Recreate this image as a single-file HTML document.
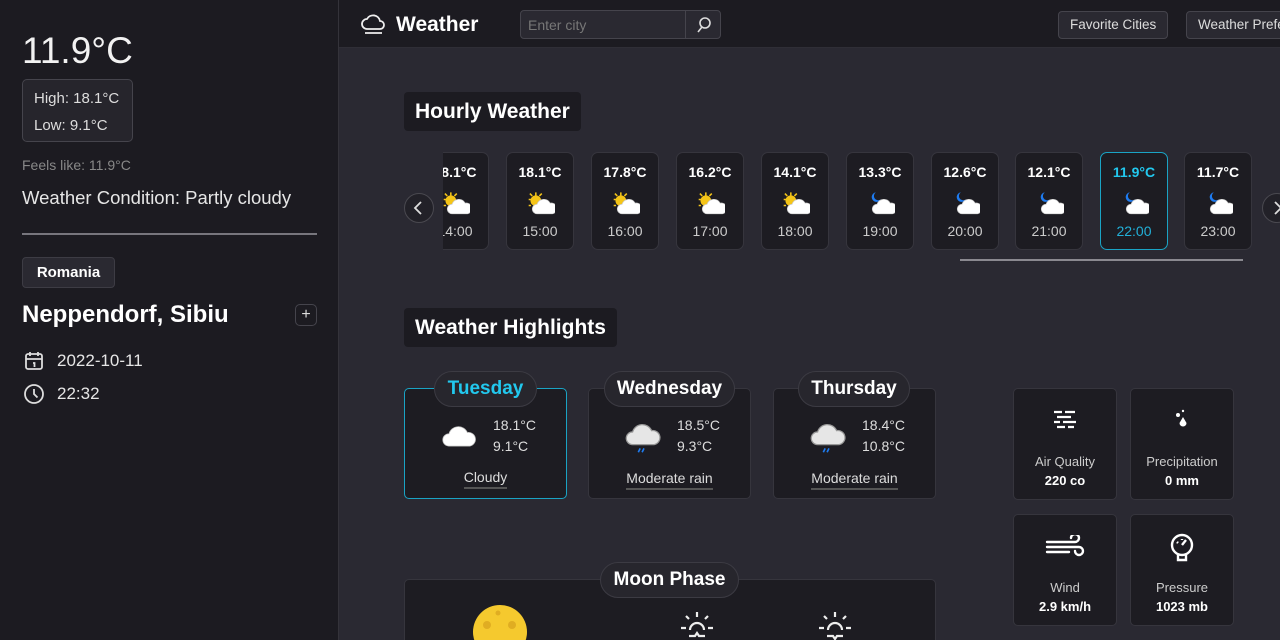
<!DOCTYPE html>
<html><head><meta charset="utf-8"><style>
*{margin:0;padding:0;box-sizing:border-box}
html,body{width:1280px;height:640px;overflow:hidden}
body{background:#2a2932;font-family:"Liberation Sans",sans-serif;color:#eee;position:relative}
.a{position:absolute}
#side{left:0;top:0;width:339px;height:640px;background:#1c1b21;border-right:1px solid #34333a}
#hdr{left:339px;top:0;width:941px;height:48px;background:#1c1b21;border-bottom:1px solid #2f2e36}
.btn{border:1px solid #45444c;border-radius:4px;background:#2a2931;font-size:14px;color:#ddd;height:28px;line-height:26px;padding:0 11px;white-space:nowrap}
.ttl{background:#1c1b21;border-radius:4px;font-weight:bold;font-size:21px;color:#fff;padding:0 11px;height:39px;line-height:39px;white-space:nowrap}
.hc{top:152px;width:68px;height:98px;background:#1d1c22;border:1px solid #36353d;border-radius:7px;text-align:center}
.hc .t{font-weight:bold;font-size:14px;margin-top:11px;color:#fff}
.hc .h{font-size:14px;color:#ccc}
.hc svg{display:block;margin:10px auto 8px}
.dc{top:388px;width:163px;height:111px;background:#1d1c22;border:1px solid #36353d;border-radius:5px}
.pill{background:#27262d;border:1px solid #3c3b43;border-radius:18px;font-weight:bold;font-size:19px;color:#fff;height:36px;line-height:34px;padding:0 8px;text-align:center;white-space:nowrap}
.sc{width:104px;height:112px;background:#1d1c22;border:1px solid #36353d;border-radius:5px;text-align:center;font-size:13px;color:#ccc}
.sc b{display:block;color:#fff;font-size:13px;margin-top:4px}
.nav{width:30px;height:30px;border-radius:50%;border:1px solid #4a4950;background:#222128}
</style></head><body>
<div id="side" class="a">
 <div class="a" style="left:22px;top:30px;font-size:37px;color:#f2f2f2">11.9°C</div>
 <div class="a" style="left:22px;top:79px;width:111px;height:63px;border:1px solid #45444c;border-radius:5px;background:#26252c;font-size:15px;color:#ddd;padding:5px 0 0 11px;line-height:27px">High: 18.1°C<br>Low: 9.1°C</div>
 <div class="a" style="left:22px;top:157px;font-size:14px;color:#888">Feels like: 11.9°C</div>
 <div class="a" style="left:22px;top:187px;font-size:18.5px;color:#e6e6e6">Weather Condition: Partly cloudy</div>
 <div class="a" style="left:22px;top:233px;width:295px;height:2px;background:#77767d"></div>
 <div class="a" style="left:22px;top:257px;width:93px;height:31px;border:1px solid #3d3c44;border-radius:4px;background:#2a2931;font-weight:bold;font-size:15px;line-height:29px;text-align:center;color:#fff">Romania</div>
 <div class="a" style="left:22px;top:301px;font-weight:bold;font-size:24px;color:#fff">Neppendorf, Sibiu</div>
 <div class="a" style="left:295px;top:304px;width:22px;height:22px;border:1px solid #45444c;border-radius:5px;text-align:center;line-height:19px;font-size:16px;color:#ddd">+</div>
 <svg class="a" style="left:23px;top:350px" width="22" height="22" viewBox="0 0 22 22" fill="none" stroke="#ddd" stroke-width="1.8"><rect x="3" y="4" width="16" height="15" rx="2"/><path d="M3 9h16M7 2v4M15 2v4M10 13h1.5v4"/></svg>
 <div class="a" style="left:57px;top:351px;font-size:17px;color:#e6e6e6">2022-10-11</div>
 <svg class="a" style="left:23px;top:383px" width="22" height="22" viewBox="0 0 22 22" fill="none" stroke="#ddd" stroke-width="1.8"><circle cx="11" cy="11" r="9"/><path d="M11 6v5l3.5 3.5"/></svg>
 <div class="a" style="left:57px;top:384px;font-size:17px;color:#e6e6e6">22:32</div>
</div>
<div id="hdr" class="a">
 <svg class="a" style="left:22px;top:12px" width="26" height="24" viewBox="0 0 26 24" fill="none" stroke="#eee" stroke-width="1.8"><path d="M6 17a5 5 0 0 1 0-10 7 7 0 0 1 13 2 4 4 0 0 1 0 8z"/><path d="M4 21h17"/></svg>
 <div class="a" style="left:57px;top:13px;font-weight:bold;font-size:21px;color:#fff">Weather</div>
 <div class="a" style="left:181px;top:10px;width:201px;height:29px;border:1px solid #45444c;border-radius:4px;background:#2a2931">
  <span class="a" style="left:7px;top:6px;font-size:14px;color:#777">Enter city</span>
  <div class="a" style="left:164px;top:0;width:1px;height:27px;background:#45444c"></div>
  <svg class="a" style="left:174px;top:5px" width="18" height="18" viewBox="0 0 18 18" fill="none" stroke="#ddd" stroke-width="1.6"><circle cx="10" cy="7" r="5"/><path d="M7 11l-4 5"/></svg>
 </div>
 <div class="a btn" style="left:719px;top:11px;font-size:13.5px">Favorite Cities</div>
 <div class="a btn" style="left:847px;top:11px;width:120px;overflow:hidden;font-size:13.5px">Weather Preferences</div>
</div>
<div class="a ttl" style="left:404px;top:92px">Hourly Weather</div>
<div class="a nav" style="left:404px;top:193px"><svg width="28" height="28" viewBox="0 0 28 28" fill="none" stroke="#ddd" stroke-width="1.8"><path d="M16 8l-6 6 6 6"/></svg></div>
<div class="a nav" style="left:1262px;top:193px"><svg width="28" height="28" viewBox="0 0 28 28" fill="none" stroke="#ddd" stroke-width="1.8"><path d="M12 8l6 6-6 6"/></svg></div>
<svg width="0" height="0" style="position:absolute"><defs>
<g id="sun"><g stroke="#f5c518" stroke-width="1.3"><path d="M9 2v3M3 8h3M4 3l2 2M14 3l-2 2M3 13h2"/></g><circle cx="9" cy="9" r="4.5" fill="#f5c518"/><path d="M10 20a4 4 0 0 1 0-8 6 6 0 0 1 11-1 4.5 4.5 0 0 1 2 9z" fill="#fff" stroke="#ccc" stroke-width=".6"/></g>
<g id="moon"><path d="M9 2a4 4 0 1 0 4 6 3.5 3.5 0 1 1-4-6z" fill="#1e7bf0"/><path d="M10 20a4 4 0 0 1 0-8 6 6 0 0 1 11-1 4.5 4.5 0 0 1 2 9z" fill="#fff" stroke="#ccc" stroke-width=".6"/></g>
</defs></svg>
<div class="a" style="left:443px;top:0;width:812px;height:260px;overflow:hidden">
 <div class="hc a" style="left:-22px"><div class="t">18.1°C</div><svg width="30" height="25" viewBox="0 0 25 21"><use href="#sun"/></svg><div class="h">14:00</div></div>
 <div class="hc a" style="left:63px"><div class="t">18.1°C</div><svg width="30" height="25" viewBox="0 0 25 21"><use href="#sun"/></svg><div class="h">15:00</div></div>
 <div class="hc a" style="left:148px"><div class="t">17.8°C</div><svg width="30" height="25" viewBox="0 0 25 21"><use href="#sun"/></svg><div class="h">16:00</div></div>
 <div class="hc a" style="left:233px"><div class="t">16.2°C</div><svg width="30" height="25" viewBox="0 0 25 21"><use href="#sun"/></svg><div class="h">17:00</div></div>
 <div class="hc a" style="left:318px"><div class="t">14.1°C</div><svg width="30" height="25" viewBox="0 0 25 21"><use href="#sun"/></svg><div class="h">18:00</div></div>
 <div class="hc a" style="left:403px"><div class="t">13.3°C</div><svg width="30" height="25" viewBox="0 0 25 21"><use href="#moon"/></svg><div class="h">19:00</div></div>
 <div class="hc a" style="left:488px"><div class="t">12.6°C</div><svg width="30" height="25" viewBox="0 0 25 21"><use href="#moon"/></svg><div class="h">20:00</div></div>
 <div class="hc a" style="left:572px"><div class="t">12.1°C</div><svg width="30" height="25" viewBox="0 0 25 21"><use href="#moon"/></svg><div class="h">21:00</div></div>
 <div class="hc a" style="left:657px;border-color:#1aa3c4"><div class="t" style="color:#22c8ee">11.9°C</div><svg width="30" height="25" viewBox="0 0 25 21"><use href="#moon"/></svg><div class="h" style="color:#22b0d8">22:00</div></div>
 <div class="hc a" style="left:741px"><div class="t">11.7°C</div><svg width="30" height="25" viewBox="0 0 25 21"><use href="#moon"/></svg><div class="h">23:00</div></div>
</div>
<div class="a" style="left:960px;top:259px;width:283px;height:2px;background:#8a8990"></div>
<div class="a ttl" style="left:404px;top:308px">Weather Highlights</div>
<svg width="0" height="0" style="position:absolute"><defs>
<g id="cl"><path d="M8 22a5 5 0 0 1 0-10 8 8 0 0 1 15-1 5.5 5.5 0 0 1 2 11z" fill="#fff" stroke="#bbb" stroke-width=".6"/></g>
<g id="rn"><path d="M8 20a5 5 0 0 1 0-10 8 8 0 0 1 15-1 5.5 5.5 0 0 1 2 11z" fill="#e6e6e6" stroke="#999" stroke-width="1"/><path d="M14 23l-1.5 3M17 23l-1.5 3" stroke="#1e7bf0" stroke-width="1.3"/></g>
</defs></svg>
<div class="a dc" style="left:404px;border-color:#1aa3c4"><svg class="a" style="left:36px;top:30px" width="38" height="32" viewBox="2 0 30 26"><use href="#cl"/></svg><div class="a" style="left:88px;top:26px;font-size:14px;color:#ddd;line-height:21px">18.1°C<br>9.1°C</div><div class="a" style="left:0;width:161px;top:80px;text-align:center;font-size:14px;color:#ddd"><span style="border-bottom:2px solid #555;padding-bottom:2px">Cloudy</span></div></div>
<div class="a dc" style="left:588px"><svg class="a" style="left:36px;top:30px" width="38" height="36" viewBox="2 0 30 28"><use href="#rn"/></svg><div class="a" style="left:88px;top:26px;font-size:14px;color:#ddd;line-height:21px">18.5°C<br>9.3°C</div><div class="a" style="left:0;width:161px;top:81px;text-align:center;font-size:14px;color:#ddd"><span style="border-bottom:2px solid #555;padding-bottom:2px">Moderate rain</span></div></div>
<div class="a dc" style="left:773px"><svg class="a" style="left:36px;top:30px" width="38" height="36" viewBox="2 0 30 28"><use href="#rn"/></svg><div class="a" style="left:88px;top:26px;font-size:14px;color:#ddd;line-height:21px">18.4°C<br>10.8°C</div><div class="a" style="left:0;width:161px;top:81px;text-align:center;font-size:14px;color:#ddd"><span style="border-bottom:2px solid #555;padding-bottom:2px">Moderate rain</span></div></div>
<div class="a pill" style="left:434px;top:371px;width:103px;color:#22c8ee">Tuesday</div>
<div class="a pill" style="left:604px;top:371px;width:131px">Wednesday</div>
<div class="a pill" style="left:798px;top:371px;width:112px">Thursday</div>
<div class="a" style="left:404px;top:579px;width:532px;height:70px;background:#1d1c22;border:1px solid #36353d;border-radius:5px"></div>
<div class="a pill" style="left:600px;top:562px;width:139px">Moon Phase</div>
<svg class="a" style="left:472px;top:605px" width="56" height="40" viewBox="0 0 56 40"><circle cx="28" cy="27" r="27" fill="#f5c92e"/><circle cx="15" cy="20" r="4" fill="#e0ad22"/><circle cx="40" cy="20" r="4" fill="#e0ad22"/><circle cx="26" cy="8" r="2.5" fill="#e0ad22"/></svg>
<svg class="a" style="left:679px;top:611px" width="36" height="29" viewBox="0 0 36 29" fill="none" stroke="#eee" stroke-width="2.2"><path d="M18 1v5M7 5l3 3M29 5l-3 3M2 17h5M29 17h5M11 19a7 7 0 0 1 14 0M10 25h6l2-3 2 3h6"/></svg>
<svg class="a" style="left:817px;top:611px" width="36" height="29" viewBox="0 0 36 29" fill="none" stroke="#eee" stroke-width="2.2"><path d="M18 1v5M7 5l3 3M29 5l-3 3M2 17h5M29 17h5M11 19a7 7 0 0 1 14 0M10 25h6l2 3 2-3h6"/></svg>
<div class="a sc" style="left:1013px;top:388px"><svg style="margin-top:20px" width="28" height="22" viewBox="0 0 28 22" stroke="#fff" stroke-width="2.2"><path d="M3 3h8M14 3h10M6 8h14M3 13h6M12 13h13M6 18h8M17 18h6"/></svg><div style="margin-top:20px">Air Quality</div><b>220 co</b></div>
<div class="a sc" style="left:1130px;top:388px"><svg style="margin-top:20px" width="28" height="22" viewBox="0 0 28 22" fill="#fff"><circle cx="10" cy="6" r="2"/><circle cx="15" cy="2" r="1.2"/><path d="M15 8l3.5 6a3.5 3.5 0 1 1-7 0z"/></svg><div style="margin-top:20px">Precipitation</div><b>0 mm</b></div>
<div class="a sc" style="left:1013px;top:514px"><svg style="margin-top:20px" width="40" height="24" viewBox="0 0 40 24" fill="none" stroke="#fff" stroke-width="2.4" stroke-linecap="round"><path d="M2 7h28a4 4 0 1 0-4-4M2 12h32a4 4 0 1 1-4 4M2 17h22"/></svg><div style="margin-top:18px">Wind</div><b>2.9 km/h</b></div>
<div class="a sc" style="left:1130px;top:514px"><svg style="margin-top:18px" width="28" height="30" viewBox="0 0 28 30" fill="none" stroke="#fff" stroke-width="2.4"><circle cx="14" cy="12" r="10"/><path d="M14 12l4-5M10 22v5h8v-5M9 9l1 1M14 6v1"/></svg><div style="margin-top:14px">Pressure</div><b>1023 mb</b></div>
</body></html>
